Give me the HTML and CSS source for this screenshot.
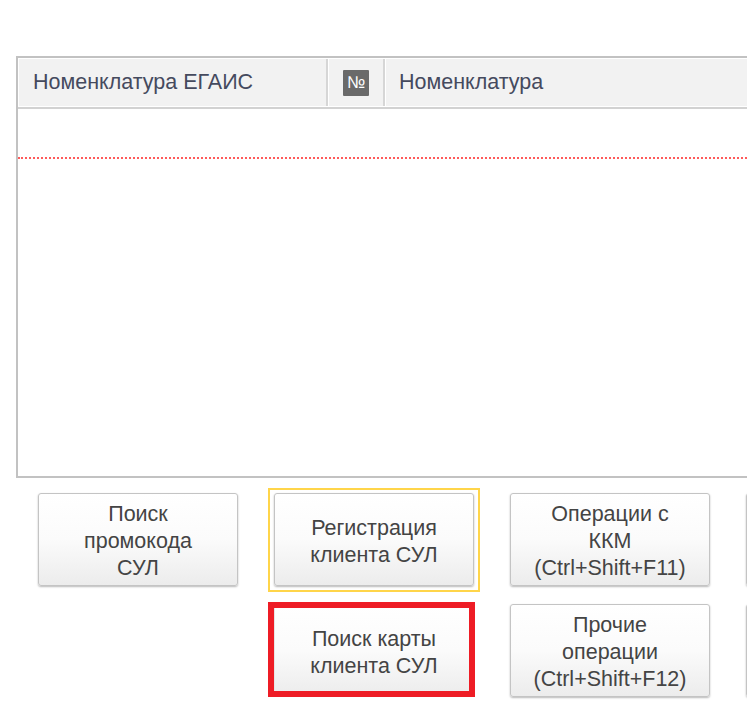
FILE: index.html
```html
<!DOCTYPE html>
<html lang="ru">
<head>
<meta charset="utf-8">
<link rel="stylesheet" href="styles.css">
</head>
<body>
<div class="page">
  <div class="table">
    <div class="thead">
      <div class="th th-name">Номенклатура ЕГАИС</div>
      <div class="th th-num"><span class="num-icon">№</span></div>
      <div class="th th-item">Номенклатура</div>
    </div>
    <div class="tbody">
      <div class="row-line"></div>
    </div>
  </div>
  <div class="buttons">
    <div class="cell"><button class="btn">Поиск<br>промокода<br>СУЛ</button></div>
    <div class="cell cell-focus"><button class="btn">Регистрация<br>клиента СУЛ</button></div>
    <div class="cell"><button class="btn">Операции с<br>ККМ<br>(Ctrl+Shift+F11)</button></div>
    <div class="cell"><button class="btn"></button></div>
    <div class="cell"></div>
    <div class="cell cell-mark"><button class="btn btn-plain">Поиск карты<br>клиента СУЛ</button><span class="mark"></span></div>
    <div class="cell"><button class="btn">Прочие<br>операции<br>(Ctrl+Shift+F12)</button></div>
    <div class="cell"><button class="btn"></button></div>
  </div>
</div>
</body>
</html>
```
FILE: styles.css
```css
html, body {
  margin: 0;
  padding: 0;
  background: #ffffff;
  overflow: hidden;
}
body {
  width: 747px;
  height: 710px;
  font-family: "Liberation Sans", Arial, sans-serif;
  color: #444444;
}
.page {
  padding-top: 56px;
  width: 1000px;
}
.table {
  margin-left: 16px;
  width: 900px;
  height: 418px;
  border: 2px solid #c2c2c2;
  border-right: none;
  box-sizing: content-box;
}
.thead {
  display: flex;
  height: 49px;
  border-bottom: 2px solid #d2d2d2;
  background: #ffffff;
}
.th {
  background: #f2f2f2;
  margin: 1px 0 1px 1px;
  display: flex;
  align-items: center;
  font-size: 21.5px;
  color: #454a5e;
  box-sizing: border-box;
}
.th-name {
  width: 309px;
  padding-left: 14px;
  border-right: 2px solid #d6d6d6;
}
.th-num {
  width: 56px;
  justify-content: center;
  border-right: 2px solid #d6d6d6;
}
.th-item {
  flex: 1;
  padding-left: 13px;
}
.num-icon {
  width: 26px;
  height: 26px;
  background: #6a6a6a;
  color: #ffffff;
  font-size: 17px;
  display: flex;
  align-items: center;
  justify-content: center;
  border-radius: 1px;
}
.tbody {
  position: relative;
  height: 367px;
}
.row-line {
  margin-top: 48px;
  border-top: 2px dotted #ff5a5a;
  height: 0;
}
.buttons {
  display: grid;
  grid-template-columns: repeat(4, 200px);
  grid-auto-rows: 93px;
  column-gap: 36px;
  row-gap: 18px;
  margin-top: 15px;
  margin-left: 38px;
}
.cell {
  position: relative;
}
.btn {
  width: 200px;
  height: 93px;
  box-sizing: border-box;
  border: 1px solid #c4c4c4;
  border-radius: 3px;
  background: linear-gradient(#ffffff 0%, #fbfbfb 50%, #ececec 100%);
  box-shadow: 0 1px 2px rgba(0, 0, 0, 0.28);
  font-family: "Liberation Sans", Arial, sans-serif;
  font-size: 21.5px;
  line-height: 27px;
  color: #444444;
  padding: 4px 0 0 0;
  text-align: center;
}
.cell-focus::before {
  content: "";
  position: absolute;
  left: -6px;
  top: -5px;
  right: -6px;
  bottom: -6px;
  border: 2px solid #ffd54a;
  pointer-events: none;
}
.btn-plain {
  border-color: #e6e6e6;
  box-shadow: none;
}
.mark {
  position: absolute;
  left: -6px;
  top: -2px;
  width: 207px;
  height: 95px;
  border: 6px solid #ee1c25;
  box-sizing: border-box;
}
```
